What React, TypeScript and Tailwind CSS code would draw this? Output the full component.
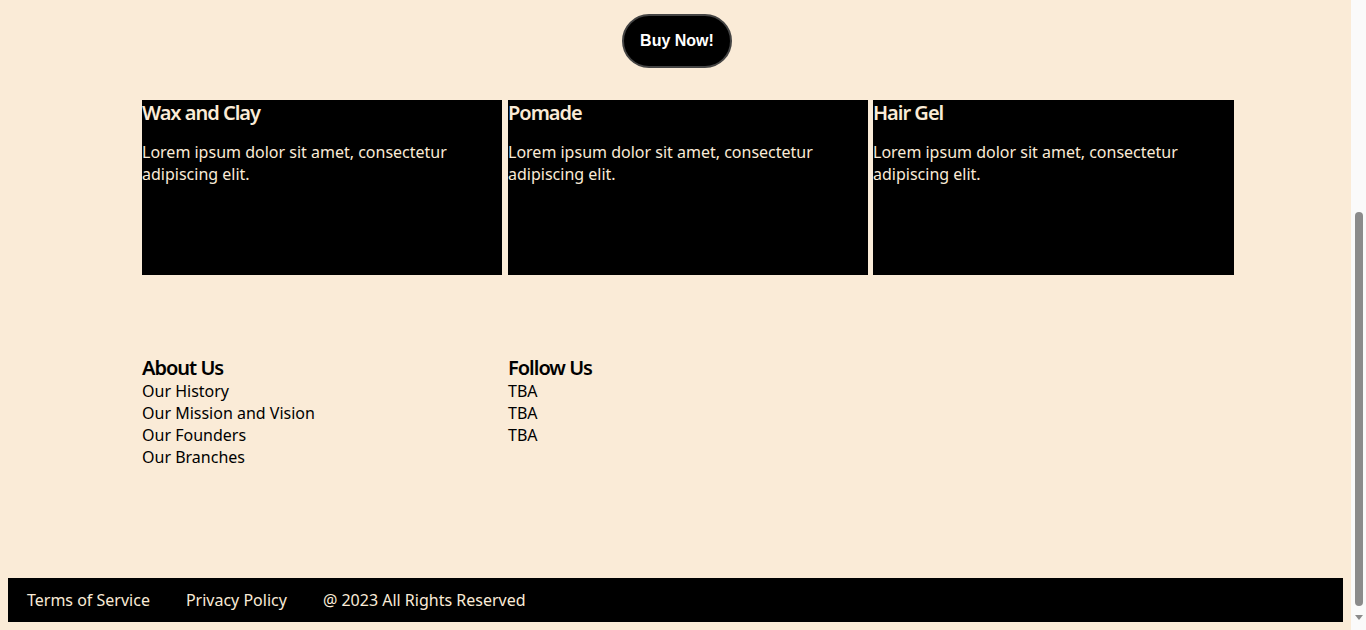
const cards = [
  { title: "Wax and Clay", cls: "w-[360px]" },
  { title: "Pomade", cls: "w-[360px] ml-[6px]" },
  { title: "Hair Gel", cls: "w-[361px] ml-[5px]" },
];

const about = ["Our History", "Our Mission and Vision", "Our Founders", "Our Branches"];
const follow = ["TBA", "TBA", "TBA"];

export default function App() {
  return (
    <div className="flex h-[630px] overflow-hidden bg-[#faebd7] text-black" style={{ fontFamily: '"Noto Sans", sans-serif' }}>
      <div className="flex-1 flex flex-col px-2">
        <div className="flex justify-center pt-[14px] pl-[3px]">
          <button className="rounded-full border-2 border-[#444] bg-black px-4 py-4 text-[16px] leading-[18px] font-bold text-white" style={{ fontFamily: '"Liberation Sans", Arial, sans-serif' }}>
            Buy Now!
          </button>
        </div>

        <div className="flex pl-[134px] mt-[32px]">
          {cards.map((c) => (
            <div key={c.title} className={`h-[175px] bg-black text-[#faebd7] ${c.cls}`}>
              <h3 className="text-[20px] leading-[26px] font-semibold tracking-[-1px]">{c.title}</h3>
              <p className="mt-[15px] text-[16px] leading-[22px]">Lorem ipsum dolor sit amet, consectetur adipiscing elit.</p>
            </div>
          ))}
        </div>

        <div className="flex pl-[134px] mt-[80px]">
          <div className="w-[366px]">
            <h3 className="text-[20px] leading-[25px] font-semibold tracking-[-1px]">About Us</h3>
            <ul>
              {about.map((a) => (
                <li key={a} className="text-[16px] leading-[22px]">{a}</li>
              ))}
            </ul>
          </div>
          <div>
            <h3 className="text-[20px] leading-[25px] font-semibold tracking-[-1px]">Follow Us</h3>
            <ul>
              {follow.map((f, i) => (
                <li key={i} className="text-[16px] leading-[22px]">{f}</li>
              ))}
            </ul>
          </div>
        </div>

        <footer className="mt-auto mb-2 flex gap-9 bg-black px-[19px] py-[11px] text-[16px] leading-[22px] text-[#faebd7]">
          <a>Terms of Service</a>
          <a>Privacy Policy</a>
          <span>@ 2023 All Rights Reserved</span>
        </footer>
      </div>

      <div className="w-[15px] flex flex-col items-center bg-[#fafafa]">
        <div className="mt-[212px] h-[394px] w-[8px] rounded-full bg-[#8b8b8b]" />
        <svg className="mt-[9px]" width="8" height="5" viewBox="0 0 8 5">
          <path d="M0 0 H8 L4 5 Z" fill="#8b8b8b" />
        </svg>
      </div>
    </div>
  );
}
